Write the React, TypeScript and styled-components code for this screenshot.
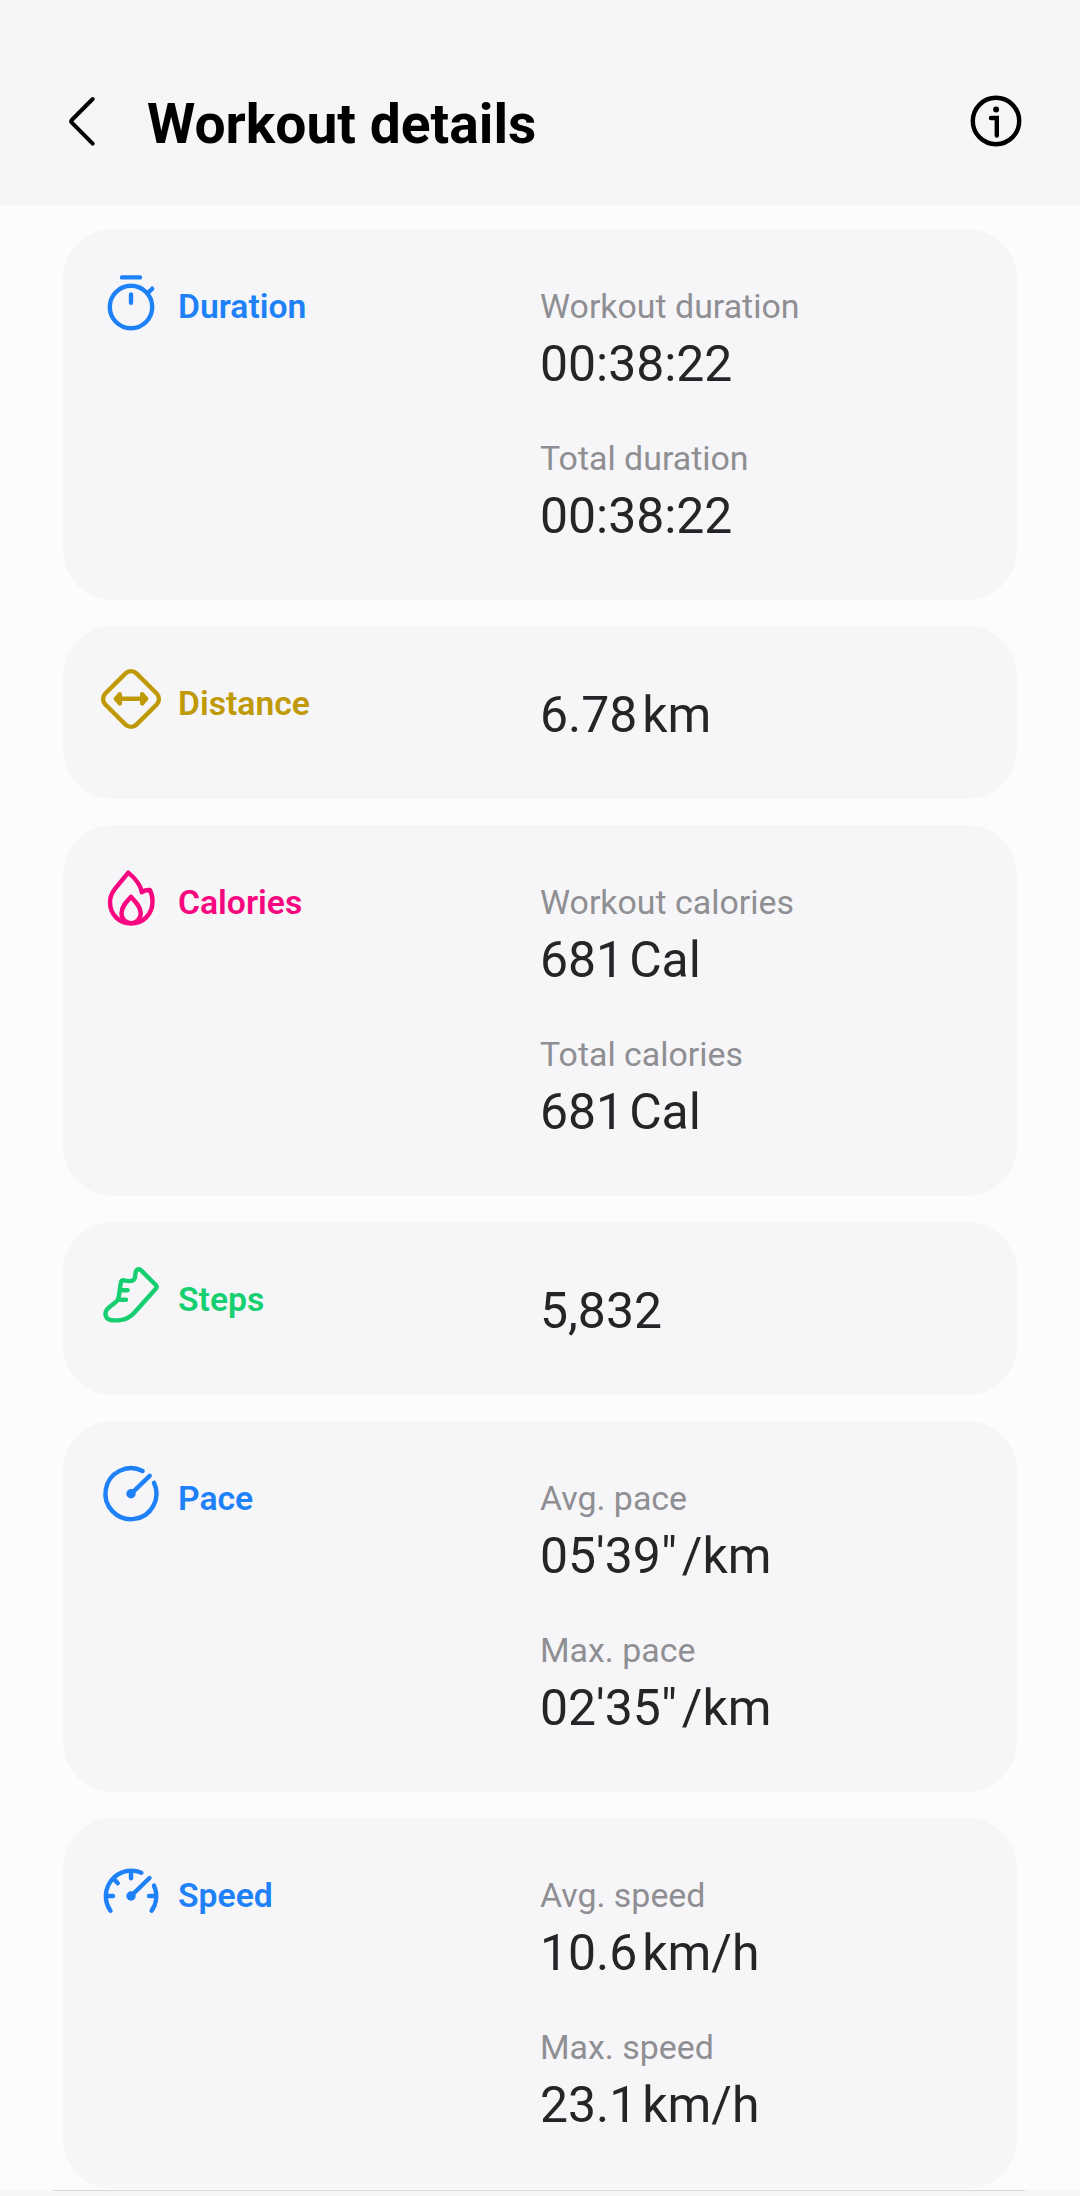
import React from "react";
import styled, { createGlobalStyle } from "styled-components";

const GlobalStyle = createGlobalStyle`
  * { box-sizing: border-box; }
  body { margin: 0; background: #fcfcfc; font-family: Roboto, "Liberation Sans", sans-serif; }
`;

const Screen = styled.div`
  display: flex;
  flex-direction: column;
  width: 1080px;
  height: 2196px;
  overflow: hidden;
  background: #fcfcfc;
`;

const Header = styled.header`
  display: flex;
  align-items: center;
  flex: none;
  height: 205px;
  padding: 37px 48px 0 46px;
  background: #f6f6f8;
`;

const IconButton = styled.button`
  display: flex;
  padding: 0;
  border: 0;
  background: none;
  color: #000;
`;

const Title = styled.h1`
  flex: 1;
  margin: 5px 0 0 29px;
  font-size: 55.2px;
  line-height: 64px;
  font-weight: 700;
  color: #000;
`;

const List = styled.main`
  display: flex;
  flex-direction: column;
  flex: none;
  gap: 26px;
  height: 1985px;
  padding: 24px 63px 0;
`;

const Card = styled.section<{ $short?: boolean }>`
  display: grid;
  grid-template-columns: 445px 1fr;
  flex: none;
  height: ${(p) => (p.$short ? 173 : 371)}px;
  padding-left: 32px;
  border-radius: 50px;
  background: #f6f6f8;
`;

const CategoryHead = styled.div<{ $color: string }>`
  display: flex;
  gap: 11px;
  padding-top: 37px;
  color: ${(p) => p.$color};
`;

const Name = styled.h2`
  margin: 21px 0 0;
  font-size: 33.7px;
  line-height: 40px;
  font-weight: 600;
`;

const Metrics = styled.div<{ $short?: boolean }>`
  display: flex;
  flex-direction: column;
  gap: 46px;
  padding-top: ${(p) => (p.$short ? 60 : 58)}px;
`;

const Metric = styled.div`
  display: flex;
  flex-direction: column;
  gap: 8px;
`;

const Caption = styled.div`
  font-size: 33.9px;
  line-height: 40px;
  color: #8f8f93;
`;

const Value = styled.div`
  display: flex;
  gap: 5px;
  font-size: 49.9px;
  line-height: 58px;
  color: #252528;
`;

const Footer = styled.footer`
  flex: none;
  height: 6px;
  padding: 0 55px 0 53px;
  background: #f6f6f8;
`;

const Divider = styled.div`
  height: 1px;
  background: #d8d8db;
`;

const Glyph = styled.svg<{ $weight: number }>`
  flex: none;
  width: 72px;
  height: 72px;
  fill: none;
  stroke: currentColor;
  stroke-width: ${(p) => p.$weight}px;
  stroke-linecap: round;
  stroke-linejoin: round;
`;

const Icon = ({ weight = 4.4, children }: { weight?: number; children: React.ReactNode }) => (
  <Glyph viewBox="0 0 72 72" $weight={weight} aria-hidden="true">{children}</Glyph>
);

const BackIcon = () => (
  <Icon weight={4}><path d="M46.7 14 L25.8 35 Q24.6 36.3 25.8 37.6 L46.7 58.7" /></Icon>
);

const InfoIcon = () => (
  <Icon weight={4.4}>
    <circle cx="36" cy="36" r="23.2" />
    <circle cx="36.1" cy="24.5" r="3" fill="currentColor" stroke="none" />
    <path d="M31 33 H36.8 V50.5" strokeLinejoin="miter" />
  </Icon>
);

const TimerIcon = () => (
  <Icon>
    <circle cx="36" cy="41" r="21.2" />
    <path d="M27 11.4 H45 M36 28.4 V36.8 M52.6 27.2 L57.2 22.7" />
  </Icon>
);

const DistanceIcon = () => (
  <Icon>
    <rect x="14" y="14" width="44" height="44" rx="7.7" transform="rotate(45 36 36)" />
    <path d="M21 35.8 H51" />
    <path d="M24.8 31.2 L21 35.8 L24.8 40.4 Z M47.2 31.2 L51 35.8 L47.2 40.4 Z" fill="currentColor" />
  </Icon>
);

const FlameIcon = () => (
  <Icon>
    <path d="M33.3 10.6 C40 16 45.8 24 46.8 30.3 C48.8 28.5 52 27.8 54.8 28 C56.6 31 57.5 35 57.5 39.5 C57.5 52.5 48 61.4 36 61.4 C24 61.4 15 52.5 15 40 C15 34.5 17.2 30.4 20.5 26.2 Z" />
    <path d="M36 34.8 C31.5 39.7 26.5 44.8 26.5 51 C26.5 57 30.5 61.2 36 61.2 C41.5 61.2 45.7 57 45.7 51 C45.7 44.8 40.5 39.7 36 34.8 Z" />
  </Icon>
);

const ShoeIcon = () => (
  <Icon>
    <path d="M46.2 11.4 L60.8 26 Q62.4 27.8 60.8 29.7 L39.5 53.5 C35 58.5 31 60.5 25 61.1 C21.5 61.5 18 61.5 15.5 61 C10.5 59.8 9.2 54.5 11.8 50.8 C14.5 47 20 44.5 22.6 41.2 C24.6 37.5 24.7 28 26 23.3 Q26.6 21 29 21.4 C33 22.3 39 22.8 40 18.5 C40.5 16 40 14.5 41 12.2 C42 9.8 44.5 9.6 46.2 11.4 Z" />
    <path d="M25.4 31.3 H32.6 M23.5 40.7 H31" />
  </Icon>
);

const PaceIcon = () => (
  <Icon>
    <path d="M47.6 13 A25.5 25.5 0 1 0 59 24.8 M36 35.8 L54.7 17.8" />
    <circle cx="36" cy="35.8" r="4.7" fill="currentColor" stroke="none" />
  </Icon>
);

const SpeedIcon = () => (
  <Icon>
    <path d="M46.4 17.7 A25.5 25.5 0 0 0 15.5 55.8 M59 30.6 A25.5 25.5 0 0 1 56.6 55.8" />
    <path d="M12 41 H18 M54 41 H60 M36 17 V23.2 M18.5 23.5 L22.8 28.2 M36 41 L54.5 23" />
    <circle cx="36" cy="41" r="4.7" fill="currentColor" stroke="none" />
  </Icon>
);

type Entry = { caption?: string; value: string; unit?: string };
type Category = { name: string; color: string; icon: React.ReactNode; entries: Entry[] };

const categories: Category[] = [
  {
    name: "Duration", color: "#1f81f8", icon: <TimerIcon />,
    entries: [
      { caption: "Workout duration", value: "00:38:22" },
      { caption: "Total duration", value: "00:38:22" },
    ],
  },
  { name: "Distance", color: "#bf9a06", icon: <DistanceIcon />, entries: [{ value: "6.78", unit: "km" }] },
  {
    name: "Calories", color: "#f8067f", icon: <FlameIcon />,
    entries: [
      { caption: "Workout calories", value: "681", unit: "Cal" },
      { caption: "Total calories", value: "681", unit: "Cal" },
    ],
  },
  { name: "Steps", color: "#16cf70", icon: <ShoeIcon />, entries: [{ value: "5,832" }] },
  {
    name: "Pace", color: "#1f81f8", icon: <PaceIcon />,
    entries: [
      { caption: "Avg. pace", value: "05'39\"", unit: "/km" },
      { caption: "Max. pace", value: "02'35\"", unit: "/km" },
    ],
  },
  {
    name: "Speed", color: "#1f81f8", icon: <SpeedIcon />,
    entries: [
      { caption: "Avg. speed", value: "10.6", unit: "km/h" },
      { caption: "Max. speed", value: "23.1", unit: "km/h" },
    ],
  },
];

export default function App() {
  return (
    <Screen>
      <GlobalStyle />
      <Header>
        <IconButton aria-label="Back"><BackIcon /></IconButton>
        <Title>Workout details</Title>
        <IconButton aria-label="Information"><InfoIcon /></IconButton>
      </Header>
      <List>
        {categories.map((c) => {
          const short = c.entries.length === 1;
          return (
            <Card key={c.name} $short={short}>
              <CategoryHead $color={c.color}>
                {c.icon}
                <Name>{c.name}</Name>
              </CategoryHead>
              <Metrics $short={short}>
                {c.entries.map((e, i) => (
                  <Metric key={i}>
                    {e.caption && <Caption>{e.caption}</Caption>}
                    <Value>
                      <span>{e.value}</span>
                      {e.unit && <span>{e.unit}</span>}
                    </Value>
                  </Metric>
                ))}
              </Metrics>
            </Card>
          );
        })}
      </List>
      <Footer><Divider /></Footer>
    </Screen>
  );
}
